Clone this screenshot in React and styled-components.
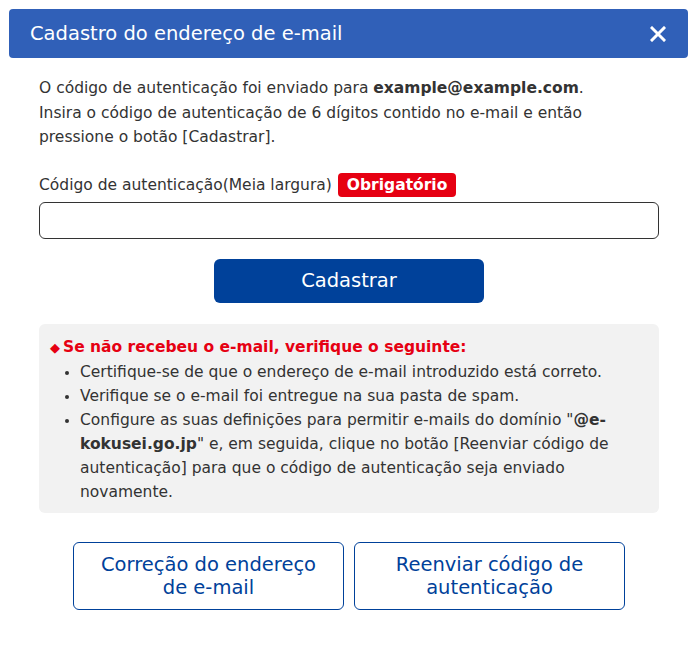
import React from 'react';
import styled, { createGlobalStyle } from 'styled-components';

const GlobalStyle = createGlobalStyle`
  body {
    margin: 0;
    background: #fff;
    font-family: "DejaVu Sans", Verdana, sans-serif;
    color: #333;
  }
`;

const Dialog = styled.div`
  width: 697px;
  height: 647px;
  box-sizing: border-box;
  padding: 9px 9px 0;
`;

const Header = styled.div`
  height: 49px;
  background: #3060b8;
  border-radius: 4px;
  display: flex;
  align-items: center;
  justify-content: space-between;
  padding: 0 20px 0 21px;
  color: #fff;
`;

const Title = styled.h1`
  margin: 0;
  font-size: 19.5px;
  font-weight: 400;
`;

const CloseButton = styled.button`
  border: none;
  background: none;
  padding: 0;
  width: 20px;
  height: 20px;
  display: flex;
  align-items: center;
  justify-content: center;
  cursor: pointer;
`;

const Body = styled.div`
  padding: 18px 29px 0 30px;
  font-size: 15.5px;
  line-height: 24px;
`;

const Intro = styled.p`
  margin: 0;
  line-height: 24.5px;
  strong {
    font-weight: 700;
  }
`;

const Label = styled.div`
  margin-top: 23px;
  display: flex;
  align-items: center;
  gap: 6px;
`;

const Badge = styled.span`
  background: #e60012;
  color: #fff;
  font-weight: 700;
  padding: 0 9px;
  border-radius: 4px;
`;

const Input = styled.input`
  display: block;
  width: 100%;
  box-sizing: border-box;
  height: 37px;
  margin-top: 5px;
  border: 1px solid #333;
  border-radius: 6px;
  font-size: 16px;
  padding: 0 10px;
`;

const PrimaryButton = styled.button`
  display: block;
  margin: 20px auto 0;
  width: 270px;
  height: 44px;
  background: #00419a;
  color: #fff;
  border: none;
  border-radius: 6px;
  font-family: inherit;
  font-size: 19.5px;
`;

const Notice = styled.div`
  margin-top: 21px;
  background: #f2f2f2;
  border-radius: 6px;
  padding: 11px 20px 9px 11px;
`;

const NoticeTitle = styled.div`
  color: #e60012;
  font-weight: 700;
  &::before {
    content: "◆";
    font-size: 13px;
    margin-right: 3px;
  }
`;

const List = styled.ul`
  margin: 0;
  padding-left: 30px;
  li::marker {
    font-size: 13px;
  }
  strong {
    font-weight: 700;
  }
`;

const ButtonRow = styled.div`
  margin-top: 29px;
  display: flex;
  justify-content: center;
  gap: 10px;
`;

const OutlineButton = styled.button`
  width: 271px;
  height: 68px;
  background: #fff;
  border: 1px solid #00419a;
  border-radius: 6px;
  color: #00419a;
  font-family: inherit;
  font-size: 19.5px;
  line-height: 23px;
  padding: 0 24px;
`;

export default function App() {
  return (
    <>
      <GlobalStyle />
      <Dialog>
        <Header>
          <Title>Cadastro do endereço de e-mail</Title>
          <CloseButton aria-label="Fechar">
            <svg width="16" height="16" viewBox="0 0 16 16">
              <path d="M2 2 L14 14 M14 2 L2 14" stroke="#fff" strokeWidth="3" strokeLinecap="square" />
            </svg>
          </CloseButton>
        </Header>
        <Body>
          <Intro>
            O código de autenticação foi enviado para <strong>example@example.com</strong>.<br />
            Insira o código de autenticação de 6 dígitos contido no e-mail e então pressione o botão [Cadastrar].
          </Intro>
          <Label>
            Código de autenticação(Meia largura)
            <Badge>Obrigatório</Badge>
          </Label>
          <Input type="text" />
          <PrimaryButton>Cadastrar</PrimaryButton>
          <Notice>
            <NoticeTitle>Se não recebeu o e-mail, verifique o seguinte:</NoticeTitle>
            <List>
              <li>Certifique-se de que o endereço de e-mail introduzido está correto.</li>
              <li>Verifique se o e-mail foi entregue na sua pasta de spam.</li>
              <li>
                Configure as suas definições para permitir e-mails do domínio "<strong>@e-kokusei.go.jp</strong>" e, em seguida, clique no botão [Reenviar código de autenticação] para que o código de autenticação seja enviado novamente.
              </li>
            </List>
          </Notice>
          <ButtonRow>
            <OutlineButton>Correção do endereço de e-mail</OutlineButton>
            <OutlineButton>Reenviar código de autenticação</OutlineButton>
          </ButtonRow>
        </Body>
      </Dialog>
    </>
  );
}
